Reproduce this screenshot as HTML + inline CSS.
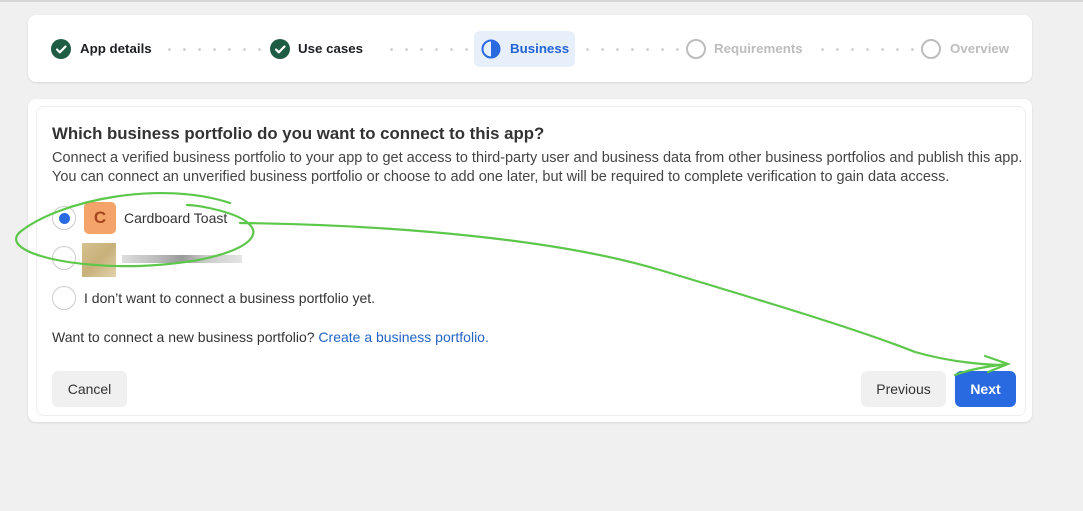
<!DOCTYPE html>
<html><head><style>
*{margin:0;padding:0;box-sizing:border-box}
body{width:1083px;height:511px;background:#f0f0f0;font-family:"Liberation Sans",Arial,sans-serif;position:relative;overflow:hidden}
.card{position:absolute;background:#fff;border-radius:8px;box-shadow:0 1px 2px rgba(0,0,0,.1)}
.t{position:absolute;white-space:nowrap}
.dots{position:absolute;height:3px;background-image:radial-gradient(circle,#d4d4d4 1.3px,transparent 1.6px);background-size:15px 3px}
.chk{position:absolute;width:20px;height:20px;border-radius:50%;background:#1e5c43}
.circ{position:absolute;width:20px;height:20px;border-radius:50%;border:2px solid #bdbdbd}
.radio{position:absolute;width:24px;height:24px;border-radius:50%;border:1px solid #ccc;background:#fff}
.btn{position:absolute;border-radius:6px;font-size:14px;text-align:center;line-height:36px}
.st{font-size:13.3px;font-weight:bold}
</style></head><body>
<div style="position:absolute;left:0;top:0;width:1083px;height:2px;background:#d6d6d6"></div>
<div class="card" style="left:28px;top:15px;width:1004px;height:67px"></div>
<div class="chk" style="left:51px;top:39px"><svg width="20" height="20"><path d="M6 10.5l2.8 2.8L14.5 7.5" stroke="#fff" stroke-width="2.2" fill="none" stroke-linecap="round" stroke-linejoin="round"/></svg></div>
<div class="t st" style="left:80px;top:41px;color:#1c1e21">App details</div>
<div class="dots" style="left:162px;top:48px;width:100px"></div>
<div class="chk" style="left:270px;top:39px"><svg width="20" height="20"><path d="M6 10.5l2.8 2.8L14.5 7.5" stroke="#fff" stroke-width="2.2" fill="none" stroke-linecap="round" stroke-linejoin="round"/></svg></div>
<div class="t st" style="left:298px;top:41px;color:#1c1e21">Use cases</div>
<div class="dots" style="left:384px;top:48px;width:90px"></div>
<div style="position:absolute;left:474px;top:31px;width:101px;height:36px;background:#e7effb;border-radius:6px"></div>
<svg style="position:absolute;left:481px;top:39px" width="20" height="20"><circle cx="10" cy="10" r="8.5" fill="none" stroke="#2a6ae0" stroke-width="2"/><path d="M10 1.5a8.5 8.5 0 0 1 0 17z" fill="#2a6ae0"/></svg>
<div class="t st" style="left:510px;top:41px;color:#2364d4">Business</div>
<div class="dots" style="left:580px;top:48px;width:100px"></div>
<div class="circ" style="left:686px;top:39px"></div>
<div class="t st" style="left:714px;top:41px;color:#bdbdbd">Requirements</div>
<div class="dots" style="left:815px;top:48px;width:100px"></div>
<div class="circ" style="left:921px;top:39px"></div>
<div class="t st" style="left:950px;top:41px;color:#bdbdbd">Overview</div>

<div class="card" style="left:28px;top:99px;width:1004px;height:323px"></div>
<div style="position:absolute;left:36px;top:106px;width:990px;height:310px;border:1px solid #eee;border-radius:8px"></div>
<div class="t" style="left:52px;top:124px;font-size:16.8px;font-weight:bold;color:#333">Which business portfolio do you want to connect to this app?</div>
<div class="t" style="left:52px;top:149px;font-size:14.5px;color:#444;line-height:19px">Connect a verified business portfolio to your app to get access to third-party user and business data from other business portfolios and publish this app.<br>You can connect an unverified business portfolio or choose to add one later, but will be required to complete verification to gain data access.</div>
<div class="radio" style="left:52px;top:206px"><div style="position:absolute;left:6px;top:6px;width:11px;height:11px;border-radius:50%;background:#2a6ae0"></div></div>
<div style="position:absolute;left:84px;top:202px;width:32px;height:32px;border-radius:5px;background:#f4a36a;color:#a4471e;font-weight:bold;font-size:17px;text-align:center;line-height:32px">C</div>
<div class="t" style="left:124px;top:210px;font-size:14px;color:#333">Cardboard Toast</div>
<div class="radio" style="left:52px;top:246px"></div>
<div style="position:absolute;left:82px;top:243px;width:34px;height:34px;background:linear-gradient(135deg,#d5c090,#c8b07a 50%,#e2d3ad)"></div>
<div style="position:absolute;left:122px;top:255px;width:120px;height:8px;background:linear-gradient(90deg,#ddd,#bbb 30%,#999 50%,#ccc 70%,#e4e4e4)"></div>
<div class="radio" style="left:52px;top:286px"></div>
<div class="t" style="left:84px;top:290px;font-size:14px;color:#333">I don’t want to connect a business portfolio yet.</div>
<div class="t" style="left:52px;top:329px;font-size:14px;color:#333">Want to connect a new business portfolio? <span style="color:#2364c4">Create a business portfolio.</span></div>
<div class="btn" style="left:52px;top:371px;width:75px;background:#f0f0f0;color:#333">Cancel</div>
<div class="btn" style="left:861px;top:371px;width:85px;background:#f0f0f0;color:#333">Previous</div>
<div class="btn" style="left:955px;top:371px;width:61px;background:#2a6ae0;color:#fff;font-weight:bold">Next</div>

<svg style="position:absolute;left:0;top:0" width="1083" height="511" fill="none" stroke="#5cc74a" stroke-width="2.2" stroke-linecap="round">
<path d="M230 203C160 180 60 200 20 232C0 250 60 268 140 266C230 262 265 240 250 225C240 213 200 205 187 205"/>
<path d="M240 223C400 225 560 240 660 270C760 300 860 330 915 352C950 362 985 365 1005 365"/>
<path d="M985 356L1008 364L988 372M955 375C970 369 990 366 1008 364"/>
</svg>
</body></html>
